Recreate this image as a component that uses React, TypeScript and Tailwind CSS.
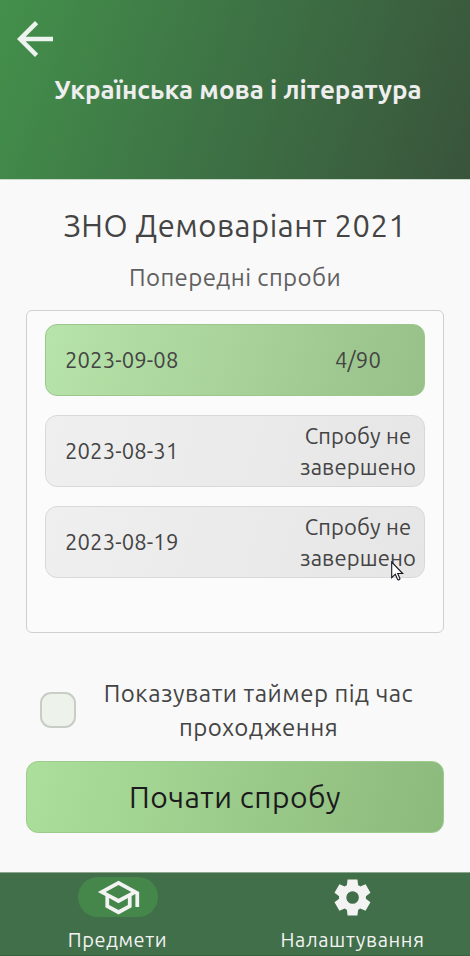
import React from "react";

const attempts = [
  { date: "2023-09-08", result: "4/90", done: true },
  { date: "2023-08-31", result: "Спробу не завершено", done: false },
  { date: "2023-08-19", result: "Спробу не завершено", done: false },
];

function BackArrow() {
  return (
    <svg className="block size-[54px] fill-[#edf3ee]" viewBox="0 0 24 24">
      <path d="M20 11H7.83l5.59-5.59L12 4l-8 8 8 8 1.41-1.41L7.83 13H20v-2z" />
    </svg>
  );
}

function SchoolIcon() {
  return (
    <svg className="size-[45px] shrink-0 fill-[#f3f3f3]" viewBox="0 0 24 24">
      <path d="M12 3L1 9l4 2.18v6L12 21l7-3.82v-6l2-1.09V17h2V9L12 3zm6.82 6L12 12.72 5.18 9 12 5.28 18.82 9zM17 15.99l-5 2.73-5-2.73v-3.72L12 15l5-2.73v3.72z" />
    </svg>
  );
}

function GearIcon() {
  return (
    <svg className="size-[43px] shrink-0 fill-[#f3f3f3]" viewBox="0 0 24 24">
      <path d="M9.25,22L8.85,18.8Q8.525,18.675 8.2375,18.5Q7.95,18.325 7.675,18.125L4.7,19.375L1.95,14.625L4.525,12.675Q4.5,12.5 4.5,12.3375V11.6625Q4.5,11.5 4.525,11.325L1.95,9.375L4.7,4.625L7.675,5.875Q7.95,5.675 8.25,5.5Q8.55,5.325 8.85,5.2L9.25,2H14.75L15.15,5.2Q15.475,5.325 15.7625,5.5Q16.05,5.675 16.325,5.875L19.3,4.625L22.05,9.375L19.475,11.325Q19.5,11.5 19.5,11.6625V12.3375Q19.5,12.5 19.45,12.675L22.025,14.625L19.275,19.375L16.325,18.125Q16.05,18.325 15.75,18.5Q15.45,18.675 15.15,18.8L14.75,22ZM12.05,15.5Q13.5,15.5 14.525,14.475Q15.55,13.45 15.55,12Q15.55,10.55 14.525,9.525Q13.5,8.5 12.05,8.5Q10.575,8.5 9.5625,9.525Q8.55,10.55 8.55,12Q8.55,13.45 9.5625,14.475Q10.575,15.5 12.05,15.5Z" />
    </svg>
  );
}

function Cursor() {
  return (
    <svg className="absolute left-[391px] top-[561px] h-[20px] w-[13px]" viewBox="0 0 13 20">
      <path
        d="M.7 1v15.6l3.6-3.4 2.3 5.2c.7 1 2.7.2 2.3-1l-2.2-4.9h5L.7 1z"
        fill="#fff"
        stroke="#15151f"
        strokeWidth="1.1"
      />
    </svg>
  );
}

export default function App() {
  return (
    <div className="relative flex h-[956px] w-[470px] flex-col overflow-hidden bg-[#f9f9f9] font-['Ubuntu','Noto_Sans',sans-serif] text-[#444]">
      <header className="h-[180px] shrink-0 border-b border-[#c9d9ca] bg-[linear-gradient(110deg,#43904b_0%,#3d7044_52%,#39543b_100%)] pt-3">
        <div className="pl-2">
          <BackArrow />
        </div>
        <h1 className="ml-[6px] mt-1.5 whitespace-nowrap text-center text-[26px] leading-9 font-semibold text-[#eeeeee]">
          Українська мова і література
        </h1>
      </header>

      <main className="flex flex-1 flex-col px-[26px]">
        <h2 className="mt-[23px] whitespace-nowrap text-center text-[31px] leading-[46px] tracking-[0.5px]">
          ЗНО Демоваріант 2021
        </h2>
        <h3 className="mt-[11px] text-center text-[24px] leading-9 tracking-[0.4px] text-[#606060]">
          Попередні спроби
        </h3>

        <section className="mt-[14px] flex h-[323px] flex-col gap-[19px] rounded-md border border-[#d0d0d0] bg-[#fbfbfb] px-[18px] pt-[13px]">
          {attempts.map((a) => (
            <div
              key={a.date}
              className={
                "flex h-[72px] items-center justify-between rounded-xl border pl-[19px] text-[22px] tracking-[0.15px] " +
                (a.done
                  ? "border-[#9bc78d] bg-[linear-gradient(105deg,#b7e4aa,#98c089)]"
                  : "border-[#d9d9d9] bg-[linear-gradient(105deg,#efefef,#e6e6e6)]")
              }
            >
              <span className="pb-0.5 leading-[31px]">{a.date}</span>
              <span className={"w-[132px] text-center leading-[31px] " + (a.done ? "pb-0.5" : "")}>
                {a.result}
              </span>
            </div>
          ))}
        </section>

        <label className="mt-[43px] flex h-[68px] items-center">
          <span className="mb-px ml-[13.5px] size-[36px] shrink-0 rounded-[11px] border-2 border-[#c8cdc7] bg-[#edf2eb]" />
          <span className="ml-[15px] w-[336px] pt-0.5 text-center text-[24px] leading-[34px] tracking-[0.5px]">
            Показувати таймер під час проходження
          </span>
        </label>

        <button className="mt-[17px] h-[72px] rounded-xl border border-[#9bcb8d] bg-[linear-gradient(105deg,#abdf9b,#8cb97c)] text-[30px] tracking-[0.5px] text-[#1b1b1e]">
          Почати спробу
        </button>
      </main>

      <nav className="flex h-[84px] shrink-0 border-t border-b border-t-[#8ba58e] border-b-[#3a6341] bg-[#416f49] text-[20px] tracking-[0.6px] text-[#f3f3f3]">
        <div className="flex w-[235px] flex-col items-center pt-1">
          <span className="flex h-10 w-20 items-center justify-center rounded-full bg-[#45874b] pl-px">
            <SchoolIcon />
          </span>
          <span className="mt-2 leading-[30px]">Предмети</span>
        </div>
        <div className="flex w-[235px] flex-col items-center pt-1">
          <span className="flex h-10 w-20 items-center justify-center">
            <GearIcon />
          </span>
          <span className="mt-2 leading-[30px]">Налаштування</span>
        </div>
      </nav>

      <Cursor />
    </div>
  );
}
